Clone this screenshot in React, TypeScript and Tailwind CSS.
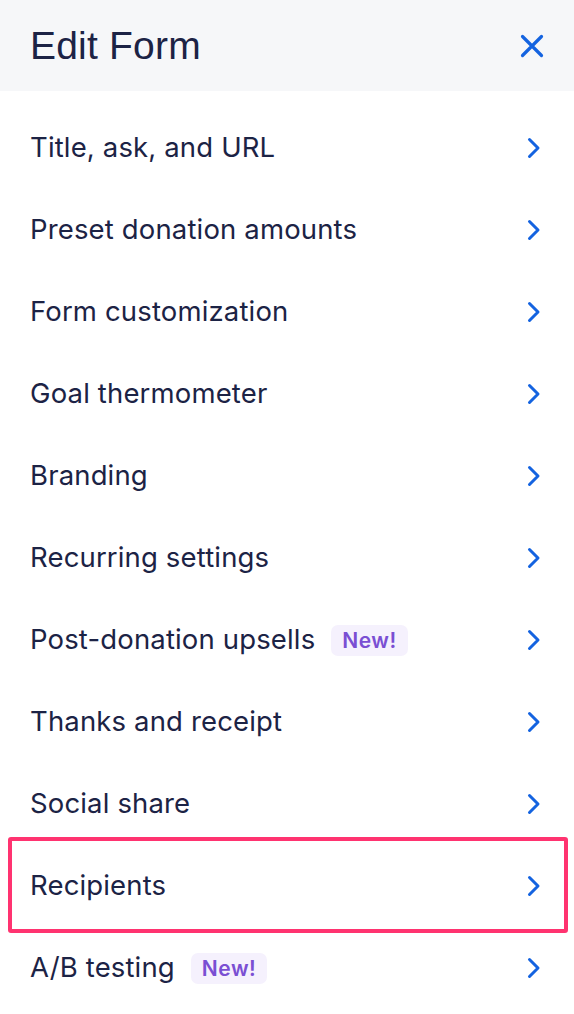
import React from "react";

const items: { label: string; badge?: boolean; highlight?: boolean }[] = [
  { label: "Title, ask, and URL" },
  { label: "Preset donation amounts" },
  { label: "Form customization" },
  { label: "Goal thermometer" },
  { label: "Branding" },
  { label: "Recurring settings" },
  { label: "Post-donation upsells", badge: true },
  { label: "Thanks and receipt" },
  { label: "Social share" },
  { label: "Recipients", highlight: true },
  { label: "A/B testing", badge: true },
];

function Chevron() {
  return (
    <svg width="16" height="24" viewBox="0 0 16 24" fill="none">
      <path d="M3.5 3.5 L12 12 L3.5 20.5" stroke="#1463e0" strokeWidth="3" strokeLinecap="round" strokeLinejoin="round" />
    </svg>
  );
}

export default function App() {
  return (
    <div className="w-[574px] h-[1014px] bg-white overflow-hidden" style={{ fontFamily: "Inter, 'Noto Sans', sans-serif" }}>
      <div className="h-[91px] bg-[#f6f7f9] flex items-center justify-between pl-[30px] pr-[30px]">
        <h1 className="text-[39px] text-[#1c2345] leading-none tracking-[0.2px]" style={{ fontFamily: "'Liberation Sans', Arial, sans-serif" }}>Edit Form</h1>
        <svg width="24" height="24" viewBox="0 0 24 24" fill="none">
          <path d="M2.5 2.5 L21.5 21.5 M21.5 2.5 L2.5 21.5" stroke="#1463e0" strokeWidth="3.2" strokeLinecap="round" />
        </svg>
      </div>
      <div className="pt-[16px]">
        {items.map((it) => (
          <div key={it.label} className="relative h-[82px] flex items-center justify-between pl-[30px] pr-[32px]">
            <div className="flex items-center gap-[16px]">
              <span className="text-[27.5px] text-[#1c2345] tracking-[0.15px]">{it.label}</span>
              {it.badge && (
                <span className="bg-[#f5f1fd] text-[#7a4fd3] font-semibold text-[21px] tracking-[0.5px] leading-none rounded-[7px] px-[11px] py-[5px]">New!</span>
              )}
            </div>
            <Chevron />
            {it.highlight && (
              <div className="absolute left-[8px] right-[6px] top-[-8px] bottom-[-6px] border-[4px] border-[#ff3370] rounded-[3px] pointer-events-none" />
            )}
          </div>
        ))}
      </div>
    </div>
  );
}
